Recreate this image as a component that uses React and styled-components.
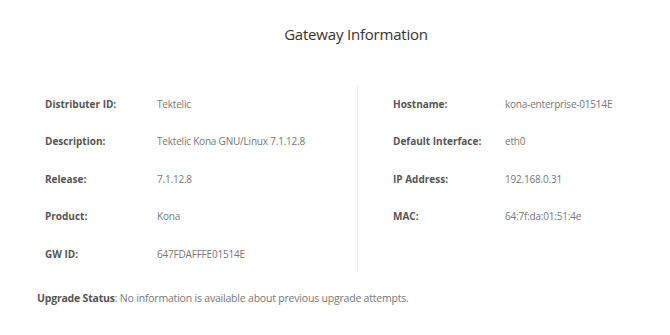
import React from 'react'
import styled, { createGlobalStyle } from 'styled-components'

const GlobalStyle = createGlobalStyle`
  html, body {
    margin: 0;
    padding: 0;
    background: #fff;
    overflow: hidden;
  }
  body {
    font-family: "Open Sans", "Noto Sans", sans-serif;
    color: #555;
  }
`

const leftRows = [
    ['Distributer ID:', 'Tektelic'],
    ['Description:', 'Tektelic Kona GNU/Linux 7.1.12.8'],
    ['Release:', '7.1.12.8'],
    ['Product:', 'Kona'],
    ['GW ID:', '647FDAFFFE01514E'],
]

const rightRows = [
    ['Hostname:', 'kona-enterprise-01514E'],
    ['Default Interface:', 'eth0'],
    ['IP Address:', '192.168.0.31'],
    ['MAC:', '64:7f:da:01:51:4e'],
]

const App = () => {
    return (
        <Page>
            <GlobalStyle />
            <Title>Gateway Information</Title>
            <Columns>
                <Column>
                    {leftRows.map(([label, value]) => (
                        <Row key={label}>
                            <Label>{label}</Label>
                            <Value>{value}</Value>
                        </Row>
                    ))}
                </Column>
                <Column divided>
                    {rightRows.map(([label, value]) => (
                        <Row key={label}>
                            <Label>{label}</Label>
                            <Value>{value}</Value>
                        </Row>
                    ))}
                </Column>
            </Columns>
            <Status>
                <strong>Upgrade Status</strong>: No information is available about previous upgrade attempts.
            </Status>
        </Page>
    )
}

const Page = styled.div`
  width: 652px;
  margin-left: 30px;
  padding-top: 24px;
`

const Title = styled.h2`
  margin: 0;
  text-align: center;
  font-size: 15px;
  font-weight: 400;
  color: #333;
  line-height: 20px;
  letter-spacing: -0.2px;
`

const Columns = styled.div`
  display: grid;
  grid-template-columns: 327px 1fr;
  margin-top: 41px;
`

const Column = styled.div`
  padding: 0 0 0 ${p => (p.divided ? '35px' : '15px')};
  min-height: 187px;
  border-left: ${p => (p.divided ? '1px solid #ececec' : 'none')};
`

const Row = styled.div`
  display: flex;
  align-items: center;
  height: 37.5px;
  font-size: 10px;
  letter-spacing: -0.2px;
`

const Label = styled.div`
  width: 112px;
  flex-shrink: 0;
  font-weight: 700;
  color: #555;
  letter-spacing: 0;
`

const Value = styled.div`
  color: #777;
`

const Status = styled.p`
  margin: 18px 0 0 7px;
  font-size: 10.5px;
  letter-spacing: -0.2px;
  color: #777;
  strong {
    color: #555;
    font-weight: 700;
  }
`

export default App
